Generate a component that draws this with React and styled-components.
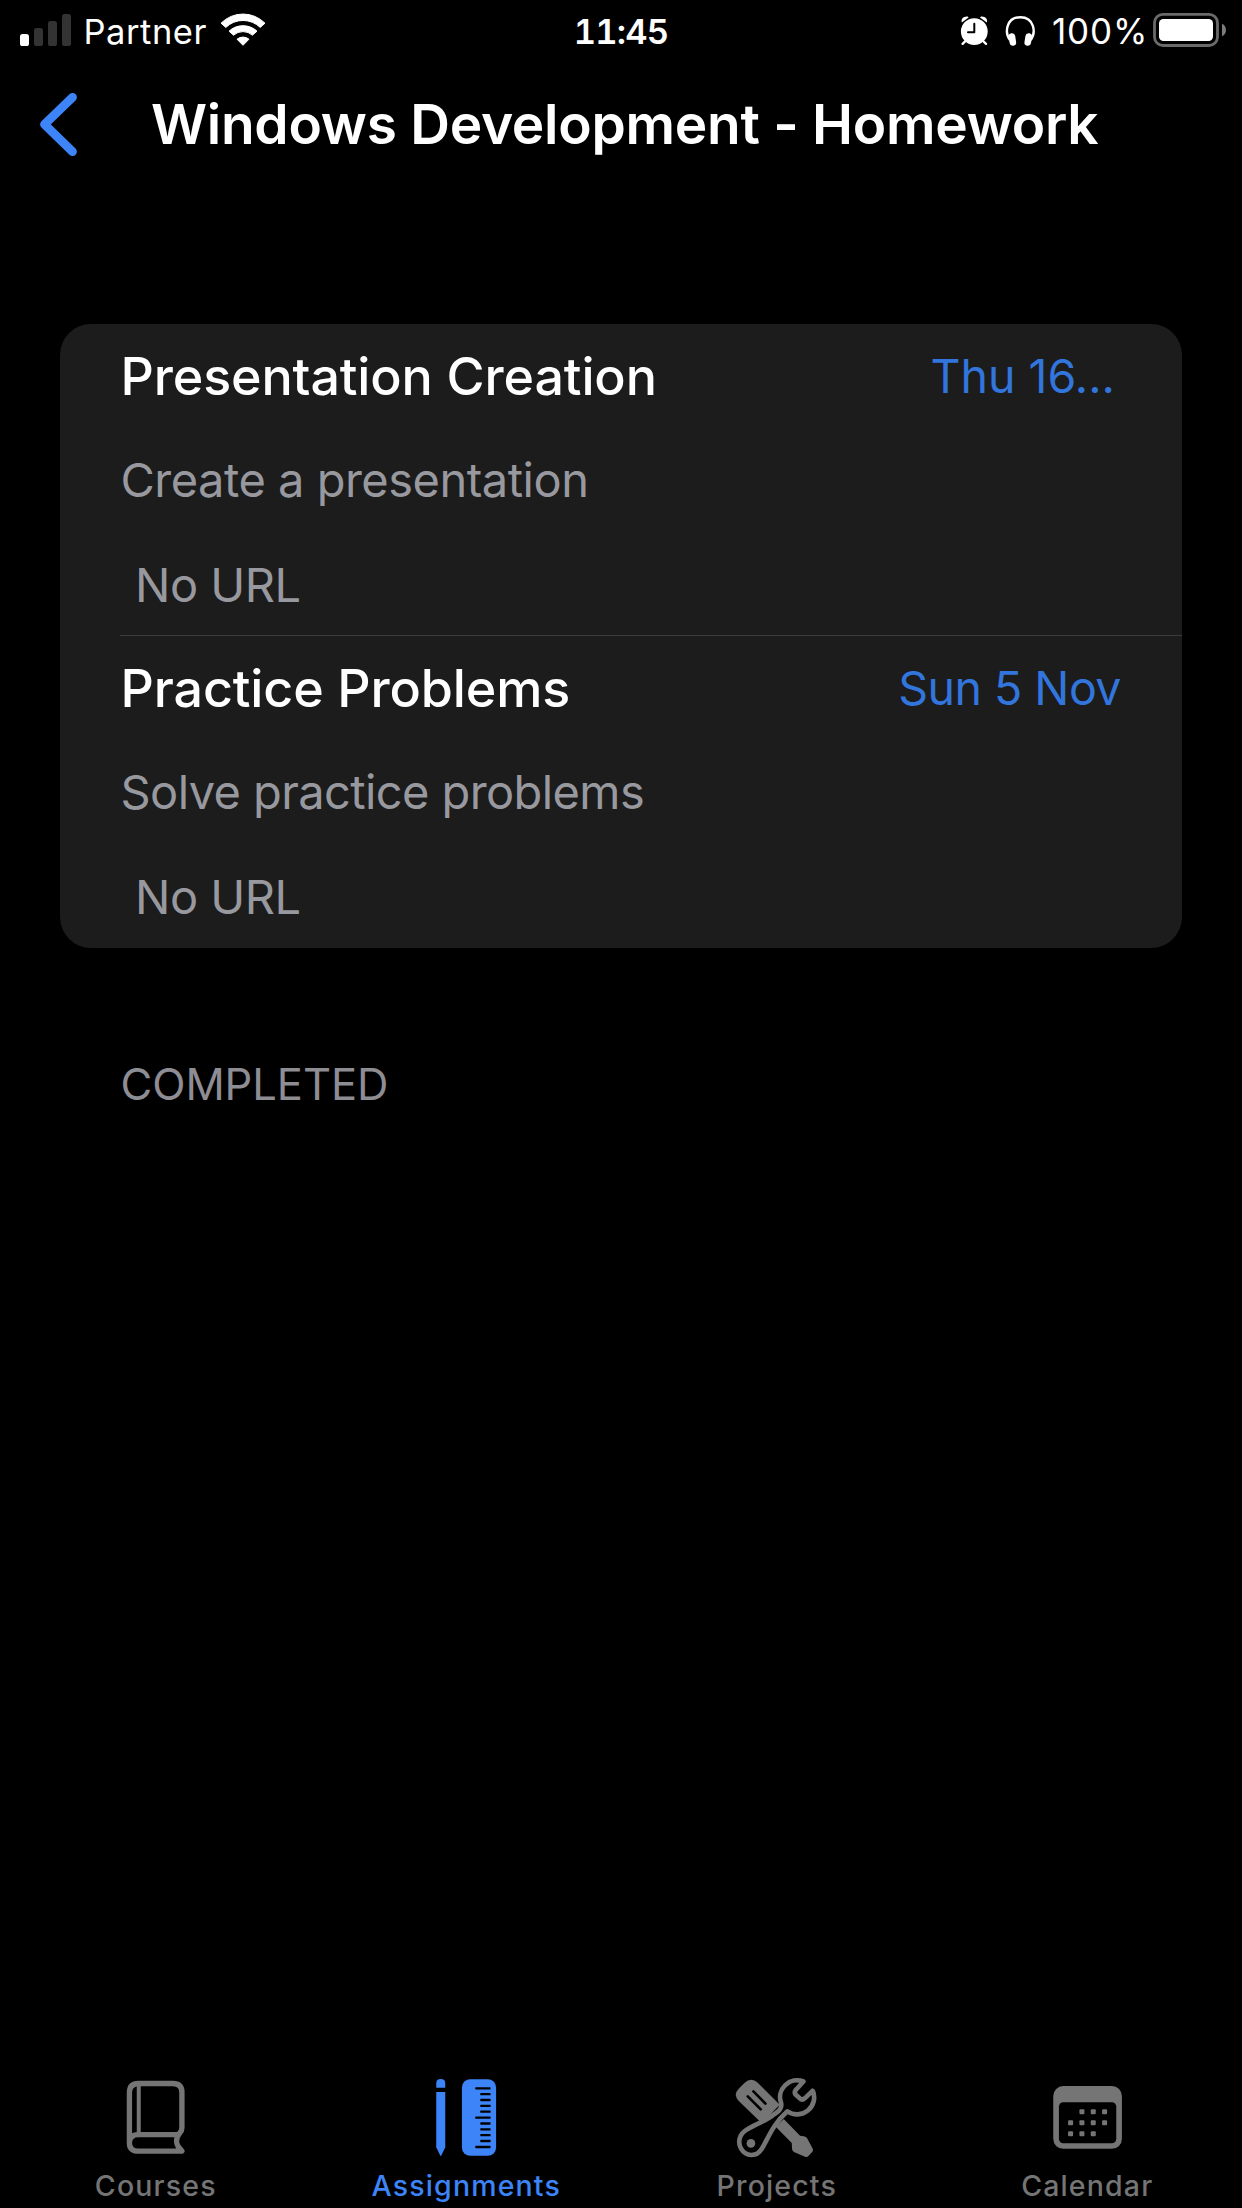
import React from "react";
import styled, { createGlobalStyle } from "styled-components";

const blue = "#3c84f7";
const gray = "#757575";

const GlobalStyle = createGlobalStyle`
  * { box-sizing: border-box; }
  body {
    margin: 0;
    background: #000;
    color: #fff;
    font-family: Inter, "Liberation Sans", sans-serif;
  }
  svg { display: block; flex: none; }
`;

const Screen = styled.div`
  width: 1242px;
  height: 2208px;
  display: flex;
  flex-direction: column;
  background: #000;
  overflow: hidden;
`;

const StatusBar = styled.header`
  display: grid;
  grid-template-columns: 1fr auto 1fr;
  height: 63px;
  padding: 0 16px 0 20px;
  line-height: 63px;
  font-size: 34.5px;
  white-space: nowrap;
`;

const StatusGroup = styled.div`
  display: flex;
  align-items: flex-start;
  justify-content: ${(p) => (p.$end ? "flex-end" : "flex-start")};
`;

const Carrier = styled.span`
  margin: 0 12.5px 0 11.5px;
  letter-spacing: 0.55px;
`;

const Clock = styled.time`
  font-weight: 600;
  font-variant-numeric: tabular-nums;
  letter-spacing: -0.8px;
  margin-left: -4px;
`;

const StatusIcons = styled.div`
  display: flex;
  gap: 15px;
`;

const Percent = styled.span`
  width: 100px;
  padding-left: 16px;
  margin-right: 17px;
  font-size: 35px;
  letter-spacing: 0.87px;
`;

const NavBar = styled.nav`
  display: flex;
  align-items: center;
  height: 122px;
  padding-left: 36px;
`;

const BackButton = styled.button`
  width: 50px;
  height: 72px;
  padding: 0;
  border: 0;
  background: none;
`;

const Title = styled.h1`
  margin: 0 0 0 65px;
  font-size: 55px;
  font-weight: 600;
  line-height: 80px;
  letter-spacing: -0.27px;
  white-space: nowrap;
`;

const Content = styled.main`
  flex: 1;
  padding: 139px 60px 0;
`;

const Card = styled.section`
  background: #1c1c1c;
  border-radius: 31px;
  overflow: hidden;
`;

const Item = styled.article`
  height: 312px;
  padding-left: 60px;
  white-space: nowrap;
`;

const ItemBody = styled.div`
  height: 312px;
  border-bottom: ${(p) => (p.$last ? "0" : "1px solid #3c3c3f")};
`;

const ItemHead = styled.div`
  display: flex;
  justify-content: space-between;
  line-height: 104px;
  height: 104px;
`;

const ItemTitle = styled.h2`
  margin: 0 0 0 0.5px;
  font-size: 52px;
  font-weight: 500;
  line-height: 106px;
  letter-spacing: -0.13px;
`;

const DueDate = styled.span`
  color: #3275dc;
  font-size: 46.5px;
  letter-spacing: ${(p) => (p.$clipped ? 0 : -0.5)}px;
  padding-right: ${(p) => (p.$clipped ? 67 : 61)}px;
`;

const Detail = styled.p`
  margin: 0;
  padding-left: ${(p) => (p.$indent ? 15 : 0.5)}px;
  color: #98989f;
  font-size: 47px;
  line-height: ${(p) => (p.$indent ? 105 : 104)}px;
  letter-spacing: ${(p) => (p.$tight ? -0.6 : -0.5)}px;
`;

const SectionLabel = styled.h3`
  margin: 92px 0 0 60.5px;
  color: #8d8d93;
  font-size: 43.5px;
  font-weight: 400;
  line-height: 88px;
  letter-spacing: -0.08px;
`;

const TabBar = styled.footer`
  display: grid;
  grid-template-columns: repeat(4, 1fr);
  height: 133px;
`;

const Tab = styled.a`
  display: flex;
  flex-direction: column;
  align-items: center;
  color: ${(p) => (p.$active ? blue : gray)};
`;

const TabLabel = styled.span`
  padding-left: 1px;
  font-size: 28.5px;
  font-weight: 500;
  line-height: 42px;
  letter-spacing: 1.15px;
`;

const SignalIcon = () => (
  <svg width="52" height="63" viewBox="20 0 52 63">
    <rect x="20" y="34" width="9" height="12" rx="2.6" fill="#fff" />
    <g fill="#333">
      <rect x="34" y="28" width="9" height="18" rx="2.6" />
      <rect x="48" y="21" width="9" height="25" rx="2.6" />
      <rect x="62" y="14" width="9" height="32" rx="2.6" />
    </g>
  </svg>
);

const WifiIcon = () => (
  <svg width="46" height="63" viewBox="220 0 46 63" fill="#fff" stroke="#fff" strokeWidth="1" strokeLinejoin="round">
    <path d="M221 23.2A31 31 0 0 1 265 23.2L260.2 27.4A24.8 24.8 0 0 0 225.8 27.4Z" />
    <path d="M229 31.2A20.5 20.5 0 0 1 257 31.2L252.4 35.2A14 14 0 0 0 233.6 35.2Z" />
    <path d="M237 39.2A9.5 9.5 0 0 1 249 39.2L243 45.3Z" />
  </svg>
);

const AlarmIcon = () => (
  <svg width="30" height="63" viewBox="960 0 30 63" fill="#fff">
    <circle cx="974.3" cy="31.6" r="13.4" />
    <path d="M961.8 22.6C960.6 19.2 963.6 16 967.6 16.6L968.6 17.6Z" />
    <path d="M986.8 22.6C988 19.2 985 16 981 16.6L980 17.6Z" />
    <path d="M966.5 40L962.6 43.8M982.1 40L986 43.8" stroke="#fff" strokeWidth="2.4" strokeLinecap="round" />
    <path d="M974.3 23.8V32.3H968" fill="none" stroke="#000" strokeWidth="2" strokeLinecap="round" strokeLinejoin="round" />
  </svg>
);

const HeadphonesIcon = () => (
  <svg width="31" height="63" viewBox="1005 0 31 63">
    <path d="M1010 40C1004.5 33 1006 17.2 1020.3 17.2C1034.6 17.2 1036.1 33 1030.6 40" fill="none" stroke="#fff" strokeWidth="2.4" />
    <rect x="1009" y="33.2" width="6.6" height="12.6" rx="3.2" fill="#fff" transform="rotate(-9 1012 39)" />
    <rect x="1025" y="33.2" width="6.6" height="12.6" rx="3.2" fill="#fff" transform="rotate(9 1028.5 39)" />
  </svg>
);

const BatteryIcon = () => (
  <svg width="73" height="63" viewBox="1153 0 73 63">
    <rect x="1154.5" y="14.3" width="63" height="31.2" rx="8.5" fill="none" stroke="#6a6a6a" strokeWidth="2.8" />
    <rect x="1159" y="19" width="54" height="22" rx="4.5" fill="#fff" />
    <path d="M1222 23.8C1227.3 25.6 1227.3 34.4 1222 36.2Z" fill="#7c7c7c" />
  </svg>
);

const BookIcon = () => (
  <svg width="100" height="90" viewBox="45.75 45 300 270" fill="none" stroke="currentColor" strokeWidth="16">
    <path d="M119 250V98Q119 70.5 146 70.5H249Q276.5 70.5 276.5 97V204Q276.5 212 270 219C256 235 257 255 276 272.5Q277 273.5 275 273.5H146Q119 273.5 119 249Q119 224 146 224H270" strokeLinejoin="round" />
    <path d="M147 72V224" strokeWidth="12" />
  </svg>
);

const ticks = [85, 102.5, 120, 137.5, 155, 173, 190.5, 208, 225.5, 243, 261];

const PencilRulerIcon = () => (
  <svg width="100" height="90" viewBox="167.25 45 300 270" fill="currentColor">
    <path d="M228 83.5V69Q228 57 241.500 57Q255 57 255 69V83.5Z" />
    <path d="M228 96H255V262L243.5 286Q241.5 290 239.5 286L228 262Z" />
    <rect x="305" y="57.5" width="102.5" height="230" rx="25" />
    {ticks.map((y, i) => (
      <rect key={y} x={i % 5 ? 360 : 345} y={y - 3.5} width={i % 5 ? 31 : 46} height="7" rx="2" fill="#000" />
    ))}
  </svg>
);

const ToolsIcon = () => (
  <svg width="100" height="90" viewBox="78.75 45 300 270">
    <path d="M117 123Q99 104 117 86L134 69Q154 50 174 68L240 134L186 190Z" fill="currentColor" />
    <path d="M144 109L183 148M161 94L197 131" stroke="#000" strokeWidth="8" strokeLinecap="round" />
    <path d="M228 200L252 177L301 227L312 229Q320 230 323 236L339 266Q341 271 338 275L326 288Q322 292 316 290L284 277Q278 274 277 268L276 249Z" fill="currentColor" />
    <path
      d="M311 64.6A51 51 0 0 0 244 129C248 146 236 154 220 165C194 184 166 194 143 208C118 222 113 247 124 266C138 290 170 292 185 268C207 232 218 194 263 154A51 51 0 0 0 339 92L315 115Q307 122 300 115L289 105Q282 98 288 90Z"
      fill="#000" stroke="currentColor" strokeWidth="14" strokeLinejoin="round"
    />
    <circle cx="153.5" cy="250" r="13" fill="currentColor" />
    <path d="M317 62L345 89L358 50Z" fill="#000" />
  </svg>
);

const days = [
  [215, 155], [249, 155], [283, 155],
  [181, 188], [215, 188], [249, 188], [283, 188],
  [181, 221], [215, 221], [249, 221],
];

const CalendarIcon = () => (
  <svg width="100" height="90" viewBox="80.25 45 300 270" fill="currentColor">
    <rect x="129" y="78" width="206" height="188.5" rx="30" />
    <rect x="146" y="126.5" width="172" height="123" rx="13" fill="#000" />
    {days.map(([x, y]) => (
      <rect key={`${x}-${y}`} x={x - 7.5} y={y - 7.5} width="15" height="15" rx="3" />
    ))}
  </svg>
);

const assignments = [
  { title: "Presentation Creation", due: "Thu 16...", clipped: true, detail: "Create a presentation" },
  { title: "Practice Problems", due: "Sun 5 Nov", clipped: false, detail: "Solve practice problems" },
];

const tabs = [
  { label: "Courses", Icon: BookIcon },
  { label: "Assignments", Icon: PencilRulerIcon, active: true },
  { label: "Projects", Icon: ToolsIcon },
  { label: "Calendar", Icon: CalendarIcon },
];

export default function App() {
  return (
    <Screen>
      <GlobalStyle />
      <StatusBar>
        <StatusGroup>
          <SignalIcon />
          <Carrier>Partner</Carrier>
          <WifiIcon />
        </StatusGroup>
        <Clock>11:45</Clock>
        <StatusGroup $end>
          <StatusIcons>
            <AlarmIcon />
            <HeadphonesIcon />
          </StatusIcons>
          <Percent>100%</Percent>
          <BatteryIcon />
        </StatusGroup>
      </StatusBar>
      <NavBar>
        <BackButton aria-label="Back">
          <svg width="50" height="72" viewBox="36 88 50 72">
            <path d="M72.5 97.3L44.5 124.4L72.5 151.6" fill="none" stroke={blue} strokeWidth="8.8" strokeLinecap="round" strokeLinejoin="round" />
          </svg>
        </BackButton>
        <Title>Windows Development - Homework</Title>
      </NavBar>
      <Content>
        <Card>
          {assignments.map((a, i) => (
            <Item key={a.title}>
              <ItemBody $last={i === assignments.length - 1}>
                <ItemHead>
                  <ItemTitle>{a.title}</ItemTitle>
                  <DueDate $clipped={a.clipped}>{a.due}</DueDate>
                </ItemHead>
                <Detail $tight={i > 0}>{a.detail}</Detail>
                <Detail $indent>No URL</Detail>
              </ItemBody>
            </Item>
          ))}
        </Card>
        <SectionLabel>COMPLETED</SectionLabel>
      </Content>
      <TabBar>
        {tabs.map(({ label, Icon, active }) => (
          <Tab key={label} $active={active}>
            <Icon />
            <TabLabel>{label}</TabLabel>
          </Tab>
        ))}
      </TabBar>
    </Screen>
  );
}
